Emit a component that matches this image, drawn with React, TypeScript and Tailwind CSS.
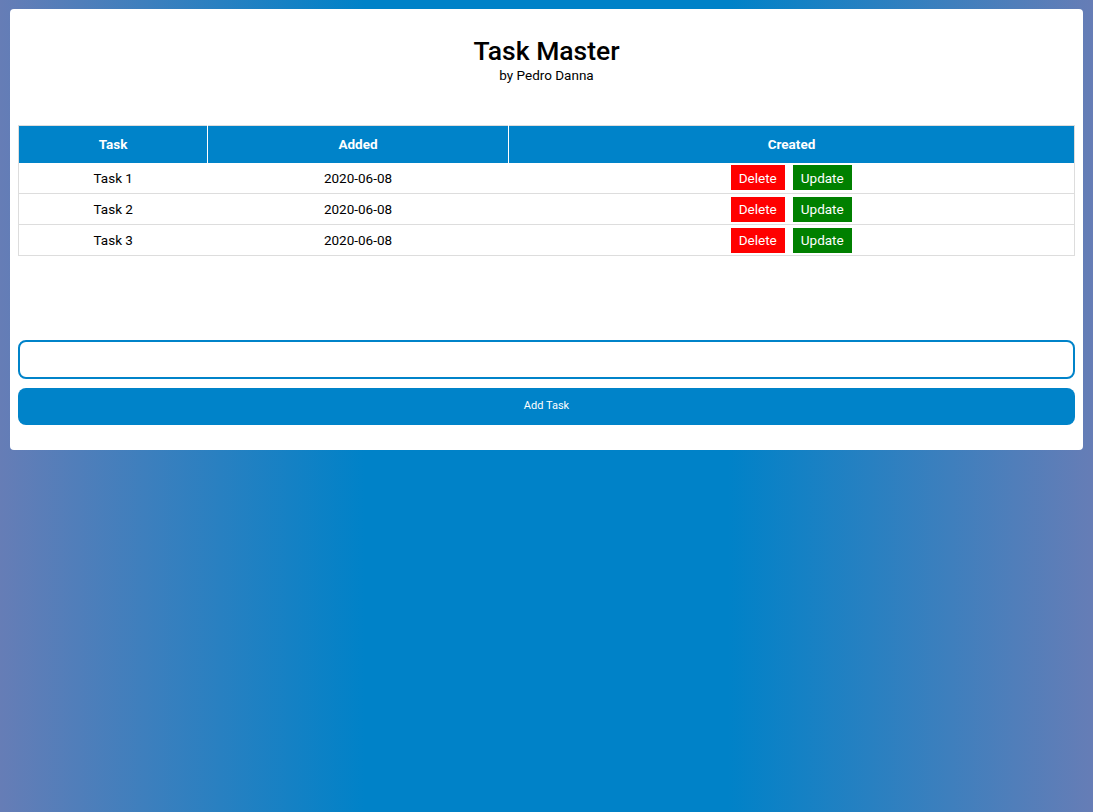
import React from "react";

const tasks = [
  { name: "Task 1", date: "2020-06-08" },
  { name: "Task 2", date: "2020-06-08" },
  { name: "Task 3", date: "2020-06-08" },
];

export default function App() {
  return (
    <div
      className="min-h-[812px] w-full pt-[9px] px-[10px] bg-[linear-gradient(to_right,#667db6,#0082c8,#0082c8,#667db6)]"
      style={{ fontFamily: "Roboto, 'Liberation Sans', sans-serif" }}
    >
      <div className="bg-white rounded-[4px] px-[8px] pt-[25px] pb-[25px]">
        <div className="flex flex-col items-center">
          <h1 className="text-[26.5px] leading-[33px] font-medium text-black">Task Master</h1>
          <p className="text-[13.5px] leading-[16px] text-black">by Pedro Danna</p>
        </div>
        <table className="w-full mt-[42px] border-collapse border border-[#dddddd] text-[13.5px]">
          <colgroup>
            <col className="w-[189px]" />
            <col className="w-[301px]" />
            <col />
          </colgroup>
          <thead>
            <tr className="bg-[#0083c9] text-white h-[37px]">
              <th className="font-bold border-r border-white">Task</th>
              <th className="font-bold border-r border-white">Added</th>
              <th className="font-bold">Created</th>
            </tr>
          </thead>
          <tbody>
            {tasks.map((t) => (
              <tr key={t.name} className="h-[31px] border-b border-[#dddddd] text-black">
                <td className="text-center">{t.name}</td>
                <td className="text-center">{t.date}</td>
                <td className="text-center">
                  <div className="flex justify-center gap-[8px]">
                    <button className="bg-[#ff0000] text-white h-[25px] w-[54px] text-[13.5px]">Delete</button>
                    <button className="bg-[#008000] text-white h-[25px] w-[59px] text-[13.5px]">Update</button>
                  </div>
                </td>
              </tr>
            ))}
          </tbody>
        </table>
        <div className="mt-[84px] flex flex-col gap-[9px]">
          <input className="w-full h-[39px] border-2 border-[#0083c9] rounded-[8px] outline-none px-2" />
          <button className="w-full h-[37px] bg-[#0083c9] rounded-[8px] text-white text-[11px]">Add Task</button>
        </div>
      </div>
    </div>
  );
}
